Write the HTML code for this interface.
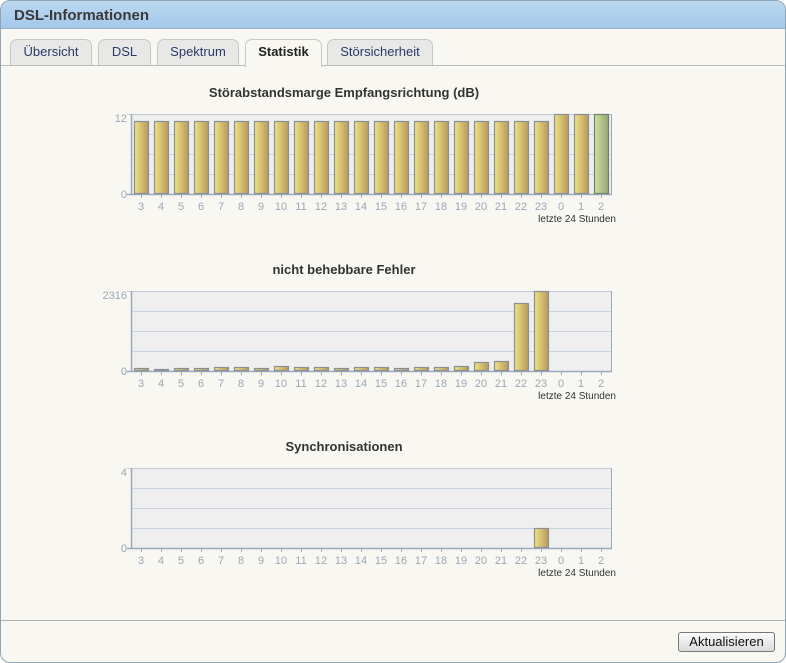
<!DOCTYPE html>
<html><head><meta charset="utf-8">
<style>
*{margin:0;padding:0;box-sizing:border-box}
body{width:786px;height:663px;background:#fff;font-family:"Liberation Sans",sans-serif;position:relative;overflow:hidden}
.frame{position:absolute;left:0;top:0;width:786px;height:663px;border:1px solid #8fa4b4;border-radius:10px;background:#f8f7f2;overflow:hidden}
.hdr{position:absolute;left:0;top:0;width:100%;height:28px;background:linear-gradient(#bcd8f0,#a4c8ea);border-bottom:1px solid #97b3cc}
.hdr span{position:absolute;left:13px;top:6px;font-size:15px;font-weight:bold;color:#3a3a3a}
.tabline{position:absolute;left:0;top:64px;width:100%;border-top:1px solid #b8bcbc}
.tab{position:absolute;top:38px;height:26px;border:1px solid #c4c8c8;border-bottom:none;border-radius:7px 7px 0 0;background:#e8e8e6;font-size:13px;color:#2a3a6a;text-align:center;line-height:24px}
.tab.act{background:#f8f7f2;height:28px;color:#222;font-weight:bold}
.t{font-size:13px;font-weight:bold;color:#333;position:absolute;left:0;width:686px;text-align:center}
svg{position:absolute;left:0;top:0}
.sep{position:absolute;left:0;top:619px;width:100%;border-top:1px solid #a8b0b0}
.btn{position:absolute;left:677px;top:631px;width:97px;height:20px;border:1px solid #777;border-radius:3px;background:linear-gradient(#fafafa,#dcdcdc);font-size:13px;text-align:center;line-height:18px;color:#111}
</style></head><body>
<div class="frame">
<div class="hdr"><span>DSL-Informationen</span></div>
<div class="tabline"></div>
<div class="tab" style="left:9px;width:82px">Übersicht</div>
<div class="tab" style="left:97px;width:53px">DSL</div>
<div class="tab" style="left:156px;width:82px">Spektrum</div>
<div class="tab act" style="left:244px;width:77px">Statistik</div>
<div class="tab" style="left:326px;width:106px">Störsicherheit</div>
<div class="t" style="top:84px">Störabstandsmarge Empfangsrichtung (dB)</div>
<div class="t" style="top:261px">nicht behebbare Fehler</div>
<div class="t" style="top:438px">Synchronisationen</div>
<svg width="786" height="663" font-family="Liberation Sans, sans-serif">
<defs>
<linearGradient id="g" x1="0" x2="1"><stop offset="0" stop-color="#eee480"/><stop offset="1" stop-color="#b99860"/></linearGradient>
<linearGradient id="gg" x1="0" x2="1"><stop offset="0" stop-color="#cde29c"/><stop offset="1" stop-color="#96a676"/></linearGradient>
</defs>
<g id="charts"></g>
<g font-size="11" fill="#9aa8b8" text-anchor="end">
<text x="126" y="121">12</text><text x="126" y="197">0</text>
<text x="126" y="298">2316</text><text x="126" y="374">0</text>
<text x="126" y="475">4</text><text x="126" y="551">0</text>
</g>
<g font-size="11" fill="#9aa8b8" text-anchor="middle">
<g transform="translate(0,209)"><text x="140">3</text><text x="160">4</text><text x="180">5</text><text x="200">6</text><text x="220">7</text><text x="240">8</text><text x="260">9</text><text x="280">10</text><text x="300">11</text><text x="320">12</text><text x="340">13</text><text x="360">14</text><text x="380">15</text><text x="400">16</text><text x="420">17</text><text x="440">18</text><text x="460">19</text><text x="480">20</text><text x="500">21</text><text x="520">22</text><text x="540">23</text><text x="560">0</text><text x="580">1</text><text x="600">2</text></g>
<g transform="translate(0,386)"><text x="140">3</text><text x="160">4</text><text x="180">5</text><text x="200">6</text><text x="220">7</text><text x="240">8</text><text x="260">9</text><text x="280">10</text><text x="300">11</text><text x="320">12</text><text x="340">13</text><text x="360">14</text><text x="380">15</text><text x="400">16</text><text x="420">17</text><text x="440">18</text><text x="460">19</text><text x="480">20</text><text x="500">21</text><text x="520">22</text><text x="540">23</text><text x="560">0</text><text x="580">1</text><text x="600">2</text></g>
<g transform="translate(0,563)"><text x="140">3</text><text x="160">4</text><text x="180">5</text><text x="200">6</text><text x="220">7</text><text x="240">8</text><text x="260">9</text><text x="280">10</text><text x="300">11</text><text x="320">12</text><text x="340">13</text><text x="360">14</text><text x="380">15</text><text x="400">16</text><text x="420">17</text><text x="440">18</text><text x="460">19</text><text x="480">20</text><text x="500">21</text><text x="520">22</text><text x="540">23</text><text x="560">0</text><text x="580">1</text><text x="600">2</text></g>
</g>
<g font-size="10" fill="#333" text-anchor="end">
<text x="615" y="221">letzte 24 Stunden</text>
<text x="615" y="398">letzte 24 Stunden</text>
<text x="615" y="575">letzte 24 Stunden</text>
</g>
</svg>
<div class="sep"></div>
<div class="btn">Aktualisieren</div>
</div>
<script>
var NS="http://www.w3.org/2000/svg",G=document.getElementById("charts");
function el(n,a){var e=document.createElementNS(NS,n);for(var k in a)e.setAttribute(k,a[k]);G.appendChild(e);return e;}
var c1=[],c3=[],i;
for(i=0;i<24;i++){c1.push(i<21?73:80);c3.push(i==20?20:0);}
var c2=[3,2,3,3,4,4,3,5,4,4,3,4,4,3,4,4,5,9,10,68,80,0,0,0];
[[113,c1],[290,c2],[467,c3]].forEach(function(c){
 var t=c[0],b=t+80,k,i;
 el("rect",{x:130,y:t,width:480,height:80,fill:"#efefef"});
 for(k=1;k<4;k++)el("line",{x1:130,x2:610,y1:t+20*k+.5,y2:t+20*k+.5,stroke:"#c8d4e0"});
 el("line",{x1:126,x2:610,y1:t+.5,y2:t+.5,stroke:"#c0ccd8"});
 el("line",{x1:610.5,x2:610.5,y1:t,y2:b,stroke:"#9aaabb"});
 el("line",{x1:130.5,x2:130.5,y1:t,y2:b,stroke:"#9aaabb","stroke-width":1.5});
 el("line",{x1:126,x2:611,y1:b+.5,y2:b+.5,stroke:"#9aaabb","stroke-width":1.5});
 for(i=0;i<24;i++){
  var cx=140+20*i;
  el("line",{x1:cx+.5,x2:cx+.5,y1:b,y2:b+4,stroke:"#9aaabb"});
  var h=c[1][i];
  var green=(t==113&&i==23);
  if(h>0)el("rect",{x:cx-6.5,y:b-h+.5,width:14,height:h-1,fill:green?"url(#gg)":"url(#g)",stroke:green?"#6f8070":"#8a8f96","stroke-width":1.2});
 }
});
</script>
</body></html>
